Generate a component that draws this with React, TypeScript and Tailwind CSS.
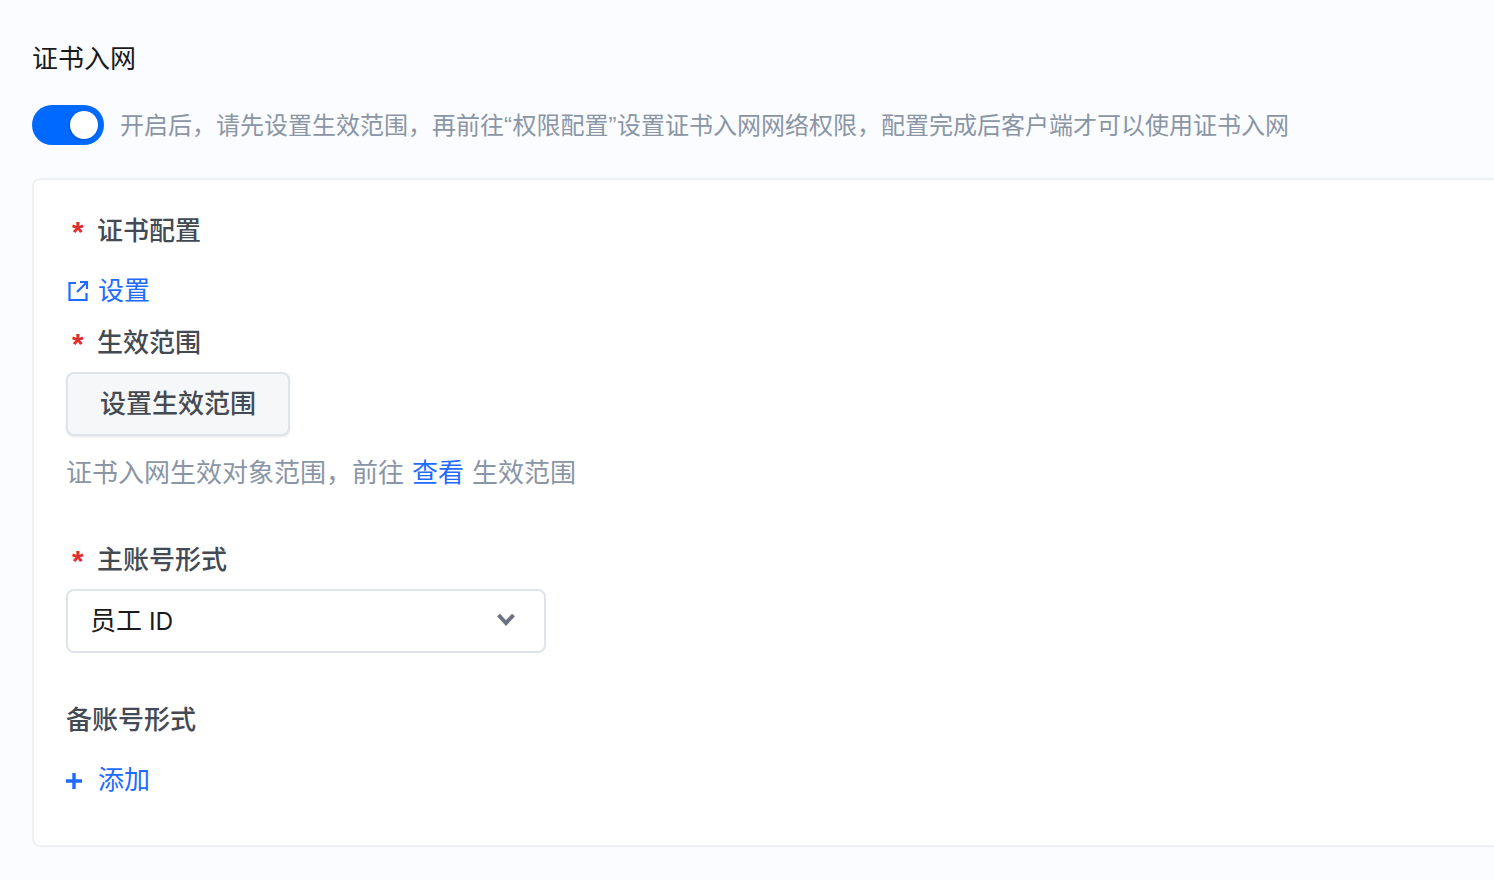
const font = "font-['Inter','Noto_Sans_CJK_SC',sans-serif]";
const quote = "font-['Liberation_Sans'] tracking-[0.5px]";

function Label({ children, required }: { children: string; required?: boolean }) {
  return (
    <div className="flex h-[40px] items-center text-[26px] font-medium leading-[36px] text-[#434a54]">
      {required && (
        <span className="ml-[6px] mr-[13px] h-[36px] w-[12px] pt-[1px] font-['Liberation_Sans'] text-[30px] font-bold leading-[36px] text-[#e02d2d]">*</span>
      )}
      <span>{children}</span>
    </div>
  );
}

export default function App() {
  return (
    <div className={`h-[880px] w-[1494px] overflow-hidden bg-[#fbfcff] pl-[32px] ${font}`}>
      <div className="pt-[39px] text-[26px] leading-[40px] text-[#1a1a1a]">证书入网</div>
      <div className="mt-[26px] flex h-[40px] items-center">
        <div className="flex h-[40px] w-[72px] items-center justify-end rounded-full bg-[#0069ff] pr-[6px]">
          <div className="h-[28px] w-[28px] rounded-full bg-white shadow-[-1px_1px_3px_rgba(0,0,0,0.2)]" />
        </div>
        <div className="ml-[16px] whitespace-nowrap pt-[2px] text-[24px] leading-[38px] text-[#8a95a5]">
          开启后，请先设置生效范围，再前往<span className={quote}>“</span>权限配置<span className={quote}>”</span>设置证书入网网络权限，配置完成后客户端才可以使用证书入网
        </div>
      </div>
      <div className="mt-[33px] h-[669px] w-[1500px] rounded-l-[8px] border-2 border-r-0 border-[#eef0f3] bg-white pl-[32px] pt-[31px]">
        <Label required>证书配置</Label>
        <div className="mt-[20px] flex h-[40px] items-center text-[26px] leading-[36px] text-[#1f6bff]">
          <svg width="24" height="24" viewBox="0 0 24 24" fill="none" stroke="currentColor" strokeWidth="2.2" className="mr-[8px]">
            <path d="M10 4H3.5v17h17v-7" />
            <path d="M14 3h7v7" />
            <path d="M21 3 11 13" />
          </svg>
          <span>设置</span>
        </div>
        <div className="mt-[12px]">
          <Label required>生效范围</Label>
        </div>
        <button className="mt-[9px] block h-[64px] w-[224px] rounded-[8px] border-2 border-[#dfe3ea] bg-[#f6f7f9] pb-[2px] text-center text-[26px] font-medium text-[#434a54] shadow-[0_1px_2px_rgba(0,0,0,0.1)]">
          设置生效范围
        </button>
        <div className="mt-[16px] flex h-[40px] items-center whitespace-nowrap pt-[2px] text-[26px] leading-[36px] text-[#8a95a5]">
          <span>证书入网生效对象范围，前往</span>
          <span className="ml-[8px] mr-[8px] text-[#1f6bff]">查看</span>
          <span>生效范围</span>
        </div>
        <div className="pt-[48px]">
          <Label required>主账号形式</Label>
        </div>
        <div className="mt-[9px] flex h-[64px] w-[480px] items-center justify-between rounded-[8px] border-2 border-[#dfe3ea] bg-white pl-[22px] pr-[29px] text-[26px] leading-[36px] text-[#1a1a1a]">
          <span>
            员工<span className="ml-[7px] text-[24.5px]">ID</span>
          </span>
          <svg width="18" height="13" viewBox="0 0 18 13" fill="none" stroke="#6b7280" strokeWidth="4" className="mb-[3px]">
            <path d="M1.5 2 9 10l7.5-8" />
          </svg>
        </div>
        <div className="mt-[47px]">
          <Label>备账号形式</Label>
        </div>
        <div className="mt-[20px] flex h-[40px] items-center text-[26px] leading-[36px] text-[#1f6bff]">
          <svg width="18" height="18" viewBox="0 0 18 18" fill="none" stroke="currentColor" strokeWidth="3.4" className="ml-[-1px] mr-[15px] mt-[2px]">
            <path d="M9 1v16M1 9h16" />
          </svg>
          <span>添加</span>
        </div>
      </div>
    </div>
  );
}
